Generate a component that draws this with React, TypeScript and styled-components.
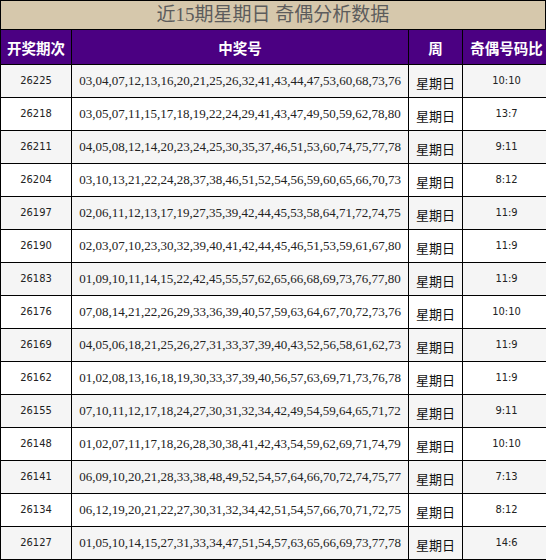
import React from "react";
import styled, { createGlobalStyle } from "styled-components";

const GlobalStyle = createGlobalStyle`
  html, body {
    margin: 0;
    padding: 0;
    background: #fff;
  }
  body {
    font-family: "Liberation Serif", "Noto Sans CJK SC", serif;
  }
`;

const Wrapper = styled.div`
  width: 546px;
`;

const Title = styled.div`
  height: 29px;
  box-sizing: border-box;
  border: 1px solid #000;
  border-bottom: none;
  background: #d6c8ac;
  color: #5c5c5c;
  font-size: 19px;
  line-height: 28px;
  text-align: center;
  white-space: nowrap;
`;

const Table = styled.table`
  width: 546px;
  border-collapse: collapse;
  table-layout: fixed;
`;

const HeadCell = styled.th<{ $w: number }>`
  width: ${(p) => p.$w}px;
  height: 34px;
  padding: 0;
  border: 1px solid #000;
  background: #4b0082;
  color: #fff;
  font-family: "Noto Sans CJK SC", sans-serif;
  font-size: 14.5px;
  font-weight: bold;
  text-align: center;
`;

const Row = styled.tr<{ $alt: boolean }>`
  background: ${(p) => (p.$alt ? "#f5f5f5" : "#fff")};
`;

const Cell = styled.td`
  height: 32px;
  padding: 0;
  border: 1px solid #000;
  text-align: center;
  color: #222;
  white-space: nowrap;
  line-height: 16px;
`;

const IssueCell = styled(Cell)`
  font-family: "DejaVu Sans Condensed", "DejaVu Sans", sans-serif;
  font-stretch: condensed;
  font-size: 11px;
`;

const NumbersCell = styled(Cell)`
  font-family: "Liberation Serif", serif;
  font-size: 13px;
`;

const DayCell = styled(Cell)`
  height: 28px;
  padding-top: 4px;
  font-family: "Noto Sans CJK SC", sans-serif;
  font-size: 13px;
  color: #111;
`;

const RatioCell = styled(Cell)`
  font-family: "DejaVu Sans Condensed", "DejaVu Sans", sans-serif;
  font-stretch: condensed;
  font-size: 11px;
`;

const rows: [string, string, string][] = [
  ["26225", "03,04,07,12,13,16,20,21,25,26,32,41,43,44,47,53,60,68,73,76", "10:10"],
  ["26218", "03,05,07,11,15,17,18,19,22,24,29,41,43,47,49,50,59,62,78,80", "13:7"],
  ["26211", "04,05,08,12,14,20,23,24,25,30,35,37,46,51,53,60,74,75,77,78", "9:11"],
  ["26204", "03,10,13,21,22,24,28,37,38,46,51,52,54,56,59,60,65,66,70,73", "8:12"],
  ["26197", "02,06,11,12,13,17,19,27,35,39,42,44,45,53,58,64,71,72,74,75", "11:9"],
  ["26190", "02,03,07,10,23,30,32,39,40,41,42,44,45,46,51,53,59,61,67,80", "11:9"],
  ["26183", "01,09,10,11,14,15,22,42,45,55,57,62,65,66,68,69,73,76,77,80", "11:9"],
  ["26176", "07,08,14,21,22,26,29,33,36,39,40,57,59,63,64,67,70,72,73,76", "10:10"],
  ["26169", "04,05,06,18,21,25,26,27,31,33,37,39,40,43,52,56,58,61,62,73", "11:9"],
  ["26162", "01,02,08,13,16,18,19,30,33,37,39,40,56,57,63,69,71,73,76,78", "11:9"],
  ["26155", "07,10,11,12,17,18,24,27,30,31,32,34,42,49,54,59,64,65,71,72", "9:11"],
  ["26148", "01,02,07,11,17,18,26,28,30,38,41,42,43,54,59,62,69,71,74,79", "10:10"],
  ["26141", "06,09,10,20,21,28,33,38,48,49,52,54,57,64,66,70,72,74,75,77", "7:13"],
  ["26134", "06,12,19,20,21,22,27,30,31,32,34,42,51,54,57,66,70,71,72,75", "8:12"],
  ["26127", "01,05,10,14,15,27,31,33,34,47,51,54,57,63,65,66,69,73,77,78", "14:6"],
];

const App = () => {
  return (
    <>
      <GlobalStyle />
      <Wrapper>
        <Title>近15期星期日 奇偶分析数据</Title>
        <Table>
          <thead>
            <tr>
              <HeadCell $w={70}>开奖期次</HeadCell>
              <HeadCell $w={336}>中奖号</HeadCell>
              <HeadCell $w={53}>周</HeadCell>
              <HeadCell $w={87}>奇偶号码比</HeadCell>
            </tr>
          </thead>
          <tbody>
            {rows.map(([issue, nums, ratio], i) => (
              <Row key={issue} $alt={i % 2 === 0}>
                <IssueCell>{issue}</IssueCell>
                <NumbersCell>{nums}</NumbersCell>
                <DayCell>星期日</DayCell>
                <RatioCell>{ratio}</RatioCell>
              </Row>
            ))}
          </tbody>
        </Table>
      </Wrapper>
    </>
  );
};

export default App;
